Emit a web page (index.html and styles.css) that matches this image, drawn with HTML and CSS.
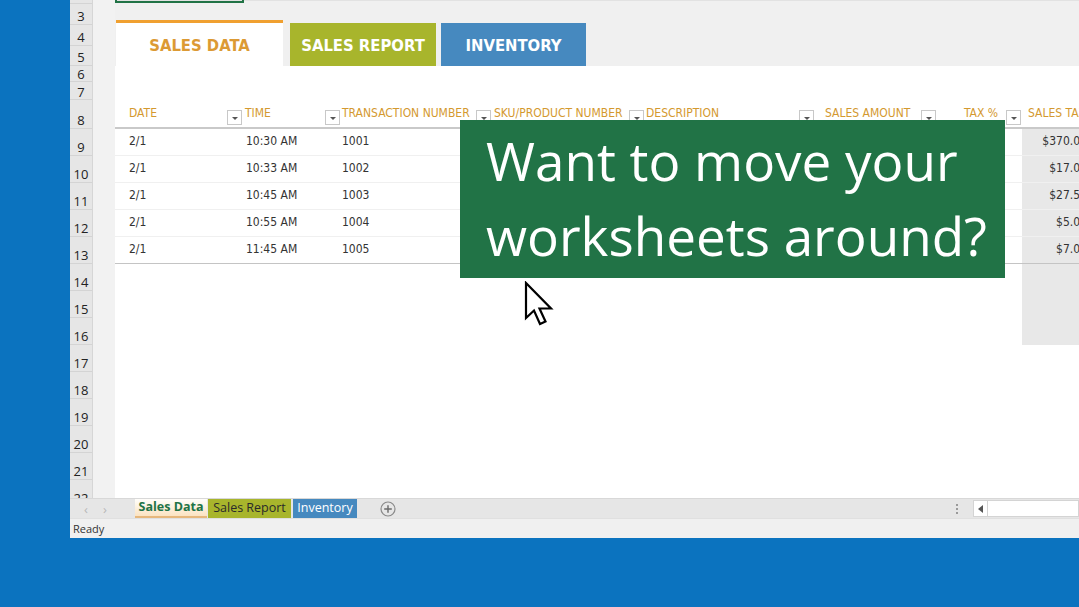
FILE: index.html
```html
<!DOCTYPE html>
<html>
<head>
<meta charset="utf-8">
<link rel="stylesheet" href="styles.css">
</head>
<body>
<div class="screen">
  <div class="window">
    <div class="main">
      <div class="rowhdr">
        <div class="rh r2"></div>
        <div class="rh r21">3</div>
        <div class="rh r21">4</div>
        <div class="rh r20">5</div>
        <div class="rh r16">6</div>
        <div class="rh r18">7</div>
        <div class="rh r29">8</div>
        <div class="rh r27">9</div>
        <div class="rh r27">10</div>
        <div class="rh r27">11</div>
        <div class="rh r27">12</div>
        <div class="rh r27">13</div>
        <div class="rh r27">14</div>
        <div class="rh r27">15</div>
        <div class="rh r27">16</div>
        <div class="rh r27">17</div>
        <div class="rh r27">18</div>
        <div class="rh r27">19</div>
        <div class="rh r27">20</div>
        <div class="rh r27">21</div>
        <div class="rh r27">22</div>
      </div>
      <div class="gutter"></div>
      <div class="sheet">
        <div class="selcell"></div>
        <div class="tabs">
          <div class="tab tab-data">SALES DATA</div>
          <div class="tab tab-report">SALES REPORT</div>
          <div class="tab tab-inv">INVENTORY</div>
        </div>
        <div class="blank"></div>
        <div class="table">
          <div class="th c1"><span>DATE</span><i class="dd"></i></div>
          <div class="th c2"><span>TIME</span><i class="dd"></i></div>
          <div class="th c3"><span>TRANSACTION NUMBER</span><i class="dd"></i></div>
          <div class="th c4"><span>SKU/PRODUCT NUMBER</span><i class="dd"></i></div>
          <div class="th c5"><span>DESCRIPTION</span><i class="dd"></i></div>
          <div class="th c6"><span>SALES AMOUNT</span><i class="dd"></i></div>
          <div class="th c7"><span>TAX %</span><i class="dd"></i></div>
          <div class="th c8"><span>SALES TAX</span></div>

          <div class="td c1">2/1</div><div class="td c2">10:30 AM</div><div class="td c3">1001</div><div class="td c4"></div><div class="td c5"></div><div class="td c6"></div><div class="td c7"></div><div class="td c8">$370.00</div>
          <div class="td c1">2/1</div><div class="td c2">10:33 AM</div><div class="td c3">1002</div><div class="td c4"></div><div class="td c5"></div><div class="td c6"></div><div class="td c7"></div><div class="td c8">$17.00</div>
          <div class="td c1">2/1</div><div class="td c2">10:45 AM</div><div class="td c3">1003</div><div class="td c4"></div><div class="td c5"></div><div class="td c6"></div><div class="td c7"></div><div class="td c8">$27.50</div>
          <div class="td c1">2/1</div><div class="td c2">10:55 AM</div><div class="td c3">1004</div><div class="td c4"></div><div class="td c5"></div><div class="td c6"></div><div class="td c7"></div><div class="td c8">$5.00</div>
          <div class="td c1 last">2/1</div><div class="td c2 last">11:45 AM</div><div class="td c3 last">1005</div><div class="td c4 last"></div><div class="td c5 last"></div><div class="td c6 last"></div><div class="td c7 last"></div><div class="td c8 last">$7.00</div>

          <div class="fill span7"></div><div class="fill c8"></div>
        </div>
        <div class="callout">Want to move your<br>worksheets around?</div>
        <svg class="cursor" width="30" height="46" viewBox="0 0 30 46">
          <path d="M2 2 L2 37 L10 29.5 L16 43 L21.5 40.5 L15.5 27.5 L27 27.5 Z" fill="#fff" stroke="#000" stroke-width="2.2" stroke-linejoin="miter"/>
        </svg>
      </div>
    </div>
    <div class="sheetbar">
      <div class="nav"><span>&#8249;</span><span>&#8250;</span></div>
      <div class="stab stab-data">Sales Data</div>
      <div class="stab stab-report">Sales Report</div>
      <div class="stab stab-inv">Inventory</div>
      <div class="addsheet">
        <svg width="16" height="16" viewBox="0 0 16 16"><circle cx="8" cy="8" r="7" fill="none" stroke="#8a8a8a" stroke-width="1.2"/><path d="M8 4.2V11.8M4.2 8H11.8" stroke="#6a6a6a" stroke-width="1.4"/></svg>
      </div>
      <div class="spacer"></div>
      <div class="vdots"><b></b><b></b><b></b></div>
      <div class="hscroll">
        <div class="sbtn"><svg width="6" height="8" viewBox="0 0 6 8"><path d="M5 0 L5 8 L0 4 Z" fill="#555"/></svg></div>
        <div class="strack"></div>
      </div>
    </div>
    <div class="status">Ready</div>
  </div>
</div>
</body>
</html>
```

FILE: styles.css
```css
* { box-sizing: border-box; }
html, body { margin: 0; padding: 0; }
body {
  width: 1079px;
  height: 607px;
  overflow: hidden;
  background: #0b73bf;
  font-family: "DejaVu Sans Condensed", "DejaVu Sans", sans-serif;
}
.screen {
  padding-left: 70px;
  height: 607px;
}
.window {
  width: 1009px;
  height: 538px;
  background: #fff;
  display: flex;
  flex-direction: column;
  overflow: hidden;
}
.main {
  height: 498px;
  display: flex;
  overflow: hidden;
}
.rowhdr {
  width: 23px;
  flex: none;
  background: #e6e6e6;
  border-right: 1px solid #d6d6d6;
  display: flex;
  flex-direction: column;
}
.rh {
  flex: none;
  border-bottom: 1px solid #d4d4d4;
  display: flex;
  align-items: flex-end;
  justify-content: center;
  padding-bottom: 1px;
  font-family: "Open Sans", "Noto Sans", sans-serif;
  font-size: 13px;
  line-height: 14px;
  color: #222;
  overflow: hidden;
}
.r2 { height: 4px; padding: 0; }
.r16 { height: 16px; padding-bottom: 0; }
.r18 { height: 18px; padding-bottom: 0; }
.r20 { height: 20px; }
.r21 { height: 21px; }
.r27 { height: 27px; }
.r29 { height: 29px; }
.gutter {
  width: 22px;
  flex: none;
  background: #f2f2f2;
}
.sheet {
  flex: 1;
  position: relative;
  display: flex;
  flex-direction: column;
  background: #fff;
  min-width: 0;
}
.selcell {
  position: absolute;
  left: 0;
  top: -20px;
  width: 129px;
  height: 23px;
  border: 2px solid #217346;
  z-index: 2;
}
.tabs {
  height: 66px;
  flex: none;
  background: #f0f0f0;
  border-top: 1px solid #e2e2e2;
  display: flex;
  align-items: flex-end;
  padding-left: 1px;
}
.tab {
  display: flex;
  align-items: center;
  justify-content: center;
  font-family: "DejaVu Sans Condensed", "DejaVu Sans", sans-serif;
  font-weight: bold;
  font-size: 16.5px;
  color: #fff;
  padding-top: 1px;
}
.tab-data {
  width: 167px;
  height: 46px;
  background: #fff;
  border-top: 3px solid #f0a030;
  color: #dc9a34;
}
.tab-report {
  width: 146px;
  height: 43px;
  margin-left: 7px;
  background: #a8b52c;
}
.tab-inv {
  width: 145px;
  height: 43px;
  margin-left: 5px;
  background: #4689bf;
}
.blank {
  height: 34px;
  flex: none;
}
.table {
  display: grid;
  grid-template-columns: 128px 98px 151px 153px 170px 122px 85px 90px;
  grid-template-rows: 29px repeat(5, 27px) 81px;
  font-size: 12px;
  color: #333;
}
.th {
  display: flex;
  align-items: flex-start;
  padding-top: 6px;
  border-bottom: 2px solid #c9c9c9;
  color: #d4992f;
  font-size: 12px;
  line-height: 14px;
  white-space: nowrap;
  overflow: hidden;
}
.th .dd {
  margin-left: auto;
  margin-top: 4px;
  margin-right: 1px;
  width: 15px;
  height: 15px;
  flex: none;
  background: #fff;
  border: 1px solid #c8c8c8;
  position: relative;
}
.th .dd::after {
  content: "";
  position: absolute;
  left: 4px;
  top: 6px;
  border-left: 3px solid transparent;
  border-right: 3px solid transparent;
  border-top: 3px solid #555;
}
.th.c1 { padding-left: 14px; }
.th.c2 { padding-left: 2px; }
.th.c3 { padding-left: 1px; }
.th.c4 { padding-left: 2px; }
.th.c5 { padding-left: 1px; }
.th.c6 { padding-left: 10px; }
.th.c7 { justify-content: flex-end; }
.th.c7 span { margin-right: 8px; }
.th.c7 .dd { margin-left: 0; }
.th.c8 { padding-left: 6px; }
.td {
  display: flex;
  align-items: center;
  border-bottom: 1px solid #f0f0f0;
  line-height: 14px;
  padding-bottom: 2px;
  white-space: nowrap;
}
.td.c1 { padding-left: 14px; }
.td.c2 { padding-left: 3px; }
.td.c3 { padding-left: 1px; }
.td.c8 {
  background: #e8e8e8;
  justify-content: flex-end;
  padding-right: 25px;
}
.td.last { border-bottom: 1px solid #c4c4c4; }
.fill.span7 { grid-column: span 7; }
.fill.c8 { background: #e8e8e8; }
.callout {
  position: absolute;
  left: 345px;
  top: 120px;
  width: 545px;
  height: 158px;
  background: #217346;
  color: #fff;
  font-family: "Open Sans", "Noto Sans", sans-serif;
  font-size: 53px;
  line-height: 75px;
  padding: 3px 0 0 26px;
  white-space: nowrap;
  z-index: 3;
}
.cursor {
  position: absolute;
  left: 409px;
  top: 281px;
  z-index: 4;
}
.sheetbar {
  height: 20px;
  flex: none;
  background: #e6e6e6;
  border-top: 1px solid #d8d8d8;
  display: flex;
  align-items: stretch;
  font-family: "Open Sans", "Noto Sans", sans-serif;
  font-size: 12.5px;
}
.nav {
  width: 65px;
  display: flex;
  align-items: center;
  gap: 15px;
  padding-left: 14px;
  color: #b8b8b8;
  font-size: 13px;
}
.stab {
  display: flex;
  align-items: center;
  justify-content: center;
  line-height: 1;
}
.stab-data {
  width: 72px;
  background: linear-gradient(#fffefb, #fbe3c2);
  color: #217346;
  font-weight: bold;
  border-bottom: 2px solid #e6b77c;
}
.stab-report {
  width: 83px;
  margin-left: 1px;
  background: #a8b52c;
  color: #2a2a2a;
}
.stab-inv {
  width: 64px;
  margin-left: 2px;
  background: #4689bf;
  color: #fff;
}
.addsheet {
  margin-left: 23px;
  display: flex;
  align-items: center;
}
.spacer { flex: 1; }
.vdots {
  width: 12px;
  display: flex;
  flex-direction: column;
  justify-content: center;
  align-items: center;
  gap: 2px;
  margin-right: 10px;
}
.vdots b {
  width: 2px;
  height: 2px;
  background: #9a9a9a;
}
.hscroll {
  width: 106px;
  display: flex;
  align-items: center;
}
.sbtn {
  width: 15px;
  height: 17px;
  background: #fff;
  border: 1px solid #d4d4d4;
  display: flex;
  align-items: center;
  justify-content: center;
}
.strack {
  flex: 1;
  height: 17px;
  background: #fff;
  border: 1px solid #d4d4d4;
  border-left: none;
}
.status {
  height: 20px;
  flex: none;
  background: #f0f0f0;
  border-top: 1px solid #e0e0e0;
  font-family: "Open Sans", "Noto Sans", sans-serif;
  font-size: 11px;
  color: #333;
  padding-left: 3px;
  display: flex;
  align-items: center;
}
```
